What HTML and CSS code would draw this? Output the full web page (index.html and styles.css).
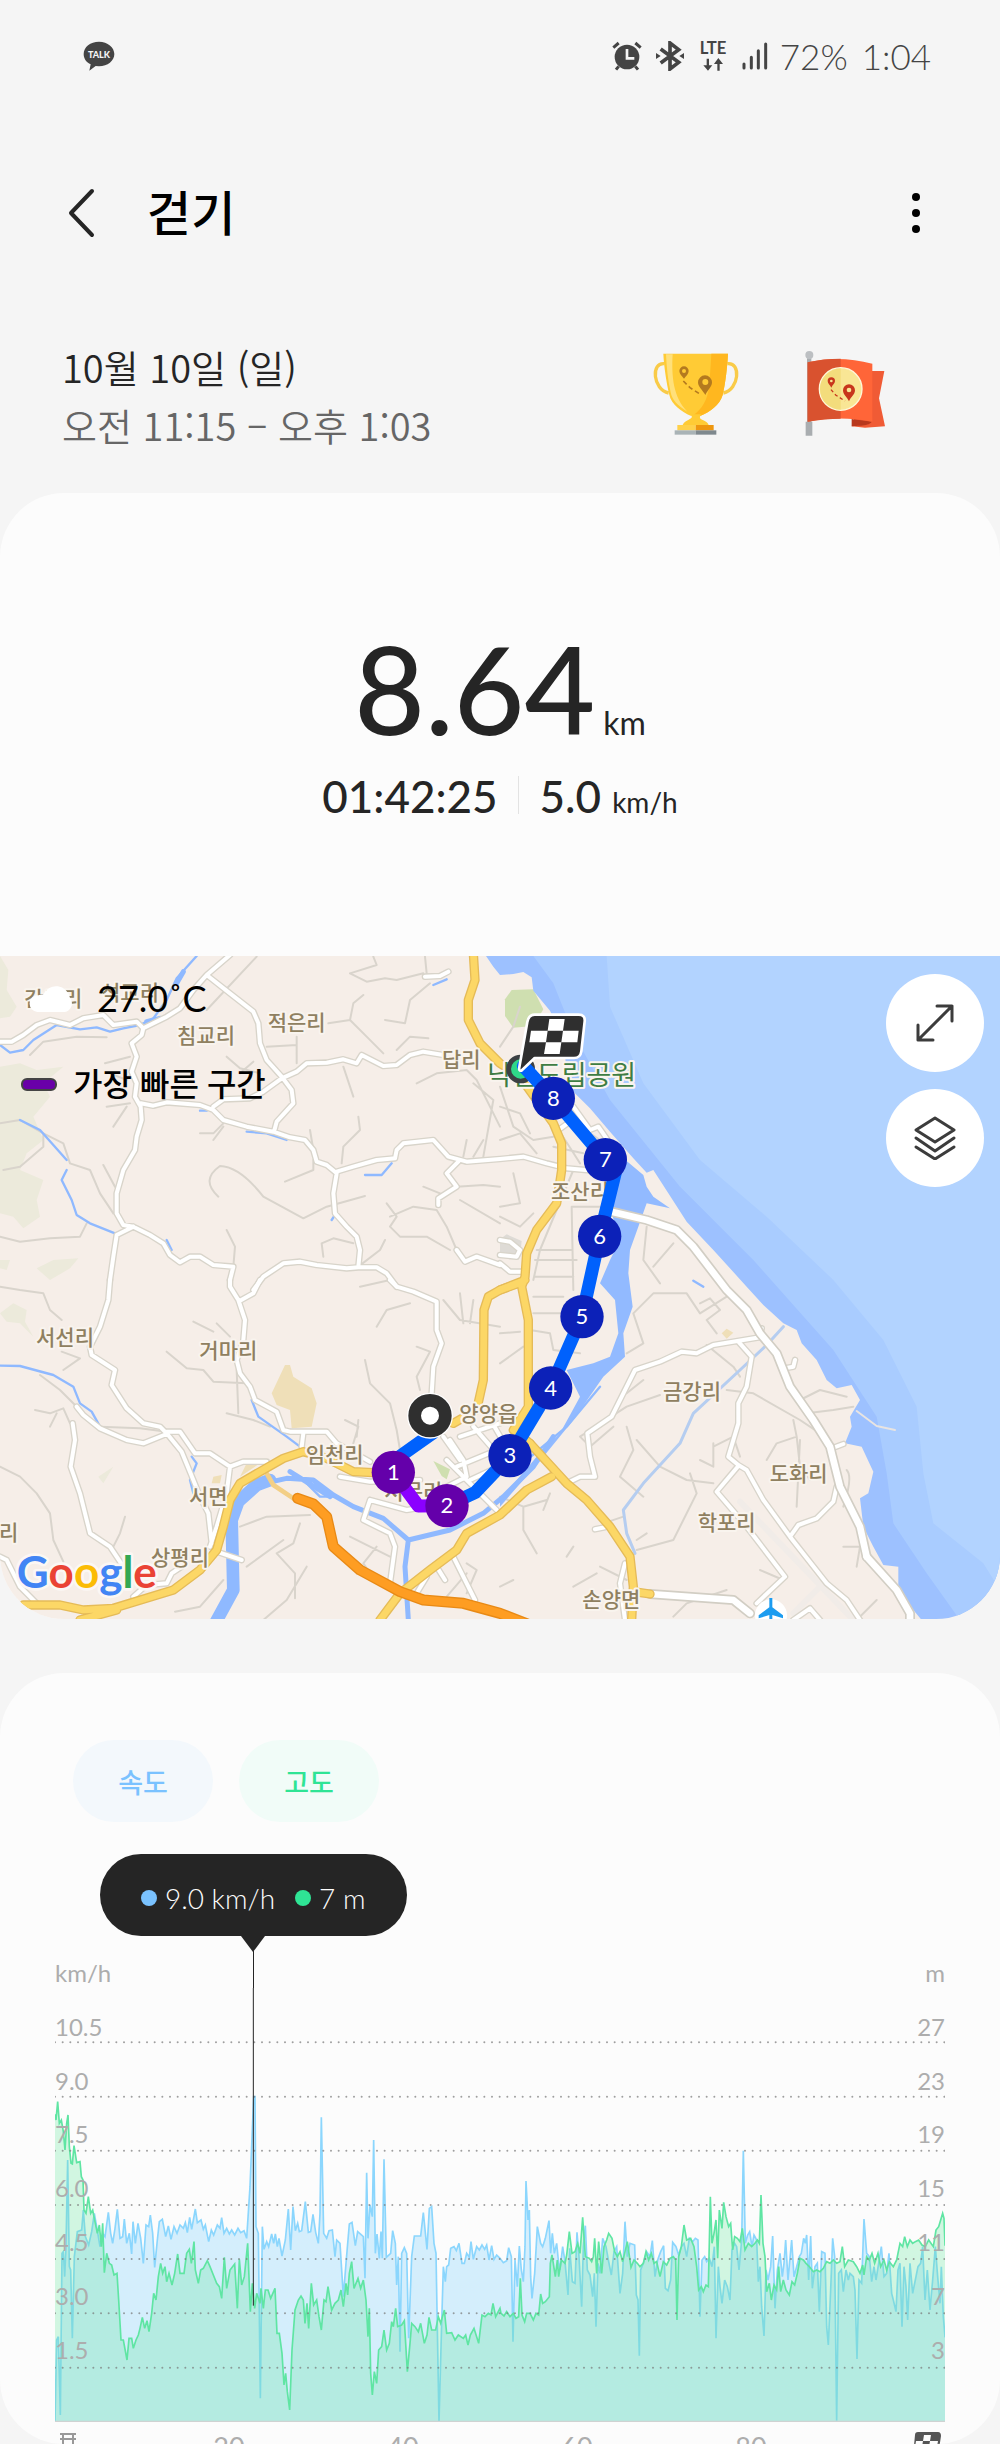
FILE: index.html
```html
<!DOCTYPE html>
<html lang="ko">
<head>
    <meta charset="UTF-8">
    <meta name="viewport" content="width=device-width, initial-scale=1.0">
    <title>걷기</title>
    <link rel="stylesheet" href="styles.css">
</head>
<body>
    <div class="status-bar">
        <svg class="talk" viewBox="0 0 96 90" aria-hidden="true">
            <path d="M48 2C22 2 2 18 2 39c0 14 8 25 21 31l-4 19 19-14 10 1c26 0 46-17 46-37S74 2 48 2z"/>
            <text x="48" y="50">TALK</text>
        </svg>
        <div class="status-right">
            <svg width="30" height="30" viewBox="0 0 90 90" aria-hidden="true">
                <circle cx="45" cy="48" r="37"/>
                <path class="cut" d="M45 24v28h22"/>
                <path class="line" d="M4 20L20 6M86 20L70 6M20 76l-8 10M70 76l8 10"/>
            </svg>
            <svg width="28" height="30" viewBox="0 0 84 90" aria-hidden="true">
                <path class="line thick" d="M14 24l54 40-26 20V6l26 20-54 40"/>
                <path d="M0 36l14 9-14 9zM84 36l-14 9 14 9z"/>
            </svg>
            <svg class="lte" width="30" height="32" viewBox="0 0 90 96" aria-hidden="true">
                <text x="45" y="42">LTE</text>
                <path d="M26 56h7v20h10L30 92 16 76h10zM58 92h7V72h10L61 54 48 72h10z"/>
            </svg>
            <svg width="26" height="28" viewBox="0 0 78 84" aria-hidden="true">
                <path class="bars" d="M6 66v12M28 46v32M49 26v52M71 6v72"/>
            </svg>
            <span class="battery">72%</span>
            <span class="clock">1:04</span>
        </div>
    </div>

    <header class="title-bar">
        <button class="icon-btn" aria-label="뒤로">
            <svg width="30" height="50" viewBox="0 0 30 50"><path class="chevron" d="M26 3L5 25l21 22"/></svg>
        </button>
        <h1>걷기</h1>
        <button class="icon-btn more" aria-label="더보기">
            <svg width="12" height="42" viewBox="0 0 12 42"><circle cx="6" cy="5" r="4"/><circle cx="6" cy="21" r="4"/><circle cx="6" cy="37" r="4"/></svg>
        </button>
    </header>

    <section class="when">
        <div>
            <p class="date">10월 10일 (일)</p>
            <p class="time">오전 11:15 – 오후 1:03</p>
        </div>
        <div class="badges">
            <svg width="90" height="90" viewBox="90 55 270 270" aria-hidden="true">
                <path fill="none" stroke="#f9cb48" stroke-width="10" d="M134 102c-42-6-36 78 12 88M322 102c42-6 36 78-12 88"/>
                <path fill="#ffcb35" d="M130 72h194c-2 40-8 90-16 124-8 30-40 52-66 62h-30c-26-10-58-34-64-62-8-34-16-84-18-124z"/>
                <path fill="#ffb71f" d="M274 72h50c-2 40-8 90-16 124-8 30-40 52-66 62h-24c30-20 44-50 48-80 4-36 6-70 8-106z"/>
                <path fill="#ffe07a" d="M138 74h20c-4 66 2 130 44 172-30-18-46-36-50-58-8-34-12-74-14-114z"/>
                <path fill="#ffcb35" d="M212 254h32c-8 10-4 14 6 18 8 4 14 8 16 14h-78c4-10 10-12 18-16 10-4 12-8 6-16z"/>
                <path fill="#ffd14a" d="M172 286h55v16h-55z"/><path fill="#ee970f" d="M227 286h54v16h-54z"/>
                <path fill="#a9b3b6" d="M164 302h63v13h-63z"/><path fill="#7f898e" d="M227 302h62v13h-62z"/>
                <path fill="#b47a1f" d="M192 110a14 14 0 0 1 14 14c0 9-8 15-14 23-6-8-14-14-14-23a14 14 0 0 1 14-14z"/>
                <path fill="#b47a1f" d="M255 137a21 21 0 0 1 21 21c0 14-14 24-20 38-8-14-22-24-22-38a21 21 0 0 1 21-21z"/>
                <circle cx="192" cy="124" r="6" fill="#ffcb35"/><circle cx="256" cy="157" r="9" fill="#ffcb35"/>
                <path fill="none" stroke="#b47a1f" stroke-width="5" stroke-dasharray="14 9" d="M190 154l20 20 34 22"/>
            </svg>
            <svg width="90" height="90" viewBox="545 55 270 270" aria-hidden="true">
                <path fill="#a9adb0" d="M560 86h13v190h3v42h-20v-42h4z"/><circle cx="567" cy="76" r="12" fill="#bcbfc2"/>
                <path fill="#f05b35" d="M750 124h42l-16 82 18 84-60 4-40-4z"/>
                <path fill="#b8381d" d="M694 268l61 8v-4c0 18-40 16-61 18z"/>
                <path fill="#ff6538" d="M562 98c70-16 130-12 194 4v174c-64-12-124-14-194 0z"/>
                <path fill="#d9522f" d="M562 98c34-8 66-11 99-11v180c-32 0-64 3-99 9z"/>
                <circle cx="661" cy="178" r="64" fill="#f9e695" stroke="#fff7d8" stroke-width="4"/>
                <path fill="#f3dc7c" d="M661 116v124a62 62 0 0 1 0-124z"/>
                <path fill="#c8361c" d="M633 143a11 11 0 0 1 11 11c0 8-8 12-11 20-4-8-11-12-11-20a11 11 0 0 1 11-11z"/>
                <path fill="#c8361c" d="M686 164a18 18 0 0 1 18 18c0 13-13 20-18 33-6-13-18-20-18-33a18 18 0 0 1 18-18z"/>
                <circle cx="633" cy="154" r="4" fill="#f9e695"/><circle cx="686" cy="181" r="7" fill="#f9e695"/>
                <path fill="none" stroke="#c8361c" stroke-width="4" stroke-dasharray="10 8" d="M632 180l14 16 28 18"/>
            </svg>
        </div>
    </section>

    <main>
        <section class="card">
            <div class="stats">
                <p class="distance">8.64<span class="unit">km</span></p>
                <p class="details">
                    <span>01:42:25</span>
                    <span class="pace">5.0 <small>km/h</small></span>
                </p>
            </div>

            <div class="map">
                <!-- map is drawn on a 3x grid, one translated group per quarter -->
                <svg class="map-canvas" viewBox="0 0 3000 1989" role="img" aria-label="지도">
                    <defs>
                        <g id="roads">
                            <path transform="translate(0 -48)" d="M0 305L35 305 70 285 110 255 150 240 210 255 250 235 310 225 340 255 410 245 430 265 500 230 540 205 580 150 620 105 690 45M620 105L690 160 760 215 775 250 780 310 800 360 845 410 875 450 880 490 830 545 822 575M430 265L425 285 395 310 410 350 395 395 410 430 405 470 422 500 425 540 410 590 405 630 370 690 350 760 350 820 370 855 400 860M422 490L460 497 500 487 600 495 640 510 670 540 740 560 820 575 870 592 915 600 940 630 950 665 980 675 1010 700M640 500L670 478 750 475 790 455 845 415 890 395 920 370 980 368 1030 358 1070 370 1085 345 1150 378 1190 375 1230 345 1270 335 1330 345M1010 695L1060 680 1130 660 1185 655 1190 630 1210 610 1300 600 1345 650 1400 665 1500 657 1570 650 1640 670 1700 685 1780 692M1010 700L1000 760 1005 820 1040 860 1070 890 1080 930 1075 980M400 860L450 885 490 910 510 945 540 967 570 950 600 950 640 975 700 980 690 1020M400 860L350 885 340 950 330 1020M760 1050L790 1010 850 970 900 965 950 975 1040 985 1075 982 1130 982 1160 1000 1190 1040M1375 665L1340 700 1370 740 1315 775 1315 795M1370 930L1395 965 1430 950 1500 975M1275 110L1320 108 1345 95"/>
                            <path transform="translate(1500 -48)" d="M220 500L270 570 295 560 330 610M175 570L210 545M0 900L30 905 60 930 50 950 0 945M0 970L30 995 65 995"/>
                            <path transform="translate(0 972)" d="M330 0L325 60 300 140 270 200 275 225 345 270 335 315 380 385 430 430 480 440 500 460 545 515 580 600 600 650 625 700 635 790M500 455L540 455 585 520 630 520 690 560 730 545 800 545M690 560L680 640 650 740 630 800M500 462L430 490 380 480 300 445 250 405 230 380M218 430L225 480 212 560 240 640 270 760 330 800 370 860M690 0L690 20 715 60 735 120 730 180 710 240 720 280 750 320 765 360 830 395 850 450 870 455 980 455 1010 490 1110 545M780 0L760 40 720 62M910 460L905 500M1170 0L1190 20 1240 35 1310 65 1310 150 1325 190 1300 260 1295 340M1110 660L1090 720 1170 760 1185 800 1170 910M1110 660L1220 690 1280 680M1020 590L1110 605 1260 600M1340 540L1440 640 1490 690M1350 480L1390 540 1400 590 1340 620M1370 560L1540 490M1410 600L1540 540M1420 440L1490 520M1380 470L1530 420M1460 400L1530 520M1330 470L1380 540M0 830L20 840 60 920 110 970M1360 830L1390 890 1425 960M1280 890L1250 940M1310 860L1335 900M650 815L725 840M400 950L440 915 500 910 515 880 545 860"/>
                            <path transform="translate(1500 972)" d="M200 610L240 590 285 590 270 530 262 460 335 410 370 340 405 270 480 245 545 215 590 220 640 195 780 172M715 185L755 230 740 320 715 370 715 430 685 530 715 555 740 570 790 660 870 770 980 910 1040 960 1080 1020M715 558L650 635 740 740 855 890 770 970M870 770L895 735 950 715 1000 665 1010 620M855 265L880 260 885 240M995 505L1030 492M780 165L785 145M285 748L315 742M375 850L360 910 375 1020M880 1020L930 985 960 1020"/>
                        </g>
                        <g id="coast-road">
                            <path transform="translate(1500 -48)" d="M335 815L440 840 530 870 580 920 680 1050 740 1110 780 1180 830 1240 870 1340 940 1440 990 1520 1020 1640 1080 1760 1100 1850"/>
                            <path transform="translate(1500 972)" d="M1100 830L1190 930 1230 1000 1230 1030M450 942L700 960 750 1000"/>
                        </g>
                        <g id="trunk">
                            <path transform="translate(0 -48)" d="M1420 40L1425 120 1405 180 1405 240 1440 310 1500 370 1560 410 1610 480 1660 550 1685 610 1685 690 1670 790 1610 870 1580 940 1575 1010 1565 1040 1585 1140 1585 1400 1540 1470 1590 1510M1500 1050L1575 1020"/>
                            <path transform="translate(0 972)" d="M70 975L180 975 250 990 340 985 520 930 600 870 650 810 670 740 690 660 720 610 780 575 850 535 910 515 980 535 1060 575 1120 578M1570 5L1500 30 1465 50 1452 90 1450 300 1430 390 1360 430M240 1020L350 990M1140 1020L1200 940 1290 870 1370 810 1400 760 1500 705 1580 630 1655 590"/>
                            <path transform="translate(1500 972)" d="M90 490L200 610 260 660 330 740 390 830 400 920 395 1020M450 942L400 935"/>
                        </g>
                    </defs>

                    <rect class="land" width="3000" height="1989"/>
                    <g class="forest">
                        <path transform="translate(0 -48)" d="M0 48L25 90 20 150 50 200 30 230 0 235zM0 380L60 370 110 390 190 380 130 430 150 470 100 530 130 600 80 640 60 690 130 720 110 780 120 830 70 865 40 830 0 820zM110 985L160 960 235 955 210 985 150 1020zM0 960L30 960 20 990 0 985z"/>
                        <path transform="translate(0 972)" d="M0 100L40 70 80 90 75 125 100 170 60 130 20 125zM295 590L340 560 310 610z"/>
                    </g>
                    <path class="park" d="M1515 130L1535 102 1600 100 1630 160 1600 210 1540 215 1515 180z"/>
                    <path class="park" d="M1300 1515L1350 1540 1340 1570 1325 1560z"/>
                    <path class="sand" transform="translate(0 972)" d="M855 255L870 255 880 290 935 325 950 370 935 440 875 445 870 390 830 375 815 340zM640 590L665 585 660 610 635 610zM740 550L780 550 720 590z"/>
                    <path class="sand" d="M2165 1132L2180 1118 2200 1130 2180 1148z"/>
                    <path class="block" d="M1500 850L1520 835 1565 855 1560 905 1500 900z"/>
                    <path class="airfield" transform="translate(1500 972)" d="M720 665L1060 1020M880 1000L960 920"/>

                    <g class="lanes">
                        <path transform="translate(0 -48)" d="M90 345L130 305 230 290 320 292M620 210L770 50M1050 100L1130 75 1120 50M1050 100L1100 125 1155 115 1190 120 1270 100M1275 50L1280 100M1155 240L1215 250 1230 180 1290 130M985 250L1050 240 1060 190 1090 165M1050 240L1100 290 1150 340M1190 330L1230 290 1285 295M890 290L890 370M800 320L890 315M680 350L720 385 780 400M720 400L760 365M600 580L640 580 670 550M640 600L670 560M315 370L390 350M330 400L380 420 400 390M340 560L380 500M320 500L390 490M0 550L60 540 130 580 190 610 210 670 270 690 300 760 340 820M130 580L130 620 60 680 10 690M310 675L345 740M0 890L60 905 150 895 240 890 260 850M655 770Q600 720 660 678Q720 680 790 770L910 835 980 800 1095 768M940 660L940 690 855 725M930 570L940 630M1075 530L1080 570 1030 620 1025 670M1030 380L1060 470M1250 430L1310 400 1400 390 1430 420 1500 560M1420 430L1480 480 1450 650M1270 740L1320 760M1160 790L1190 830 1170 860 1200 890 1280 890 1350 930M1170 830L1240 800 1310 810 1340 860 1370 930M1370 740L1450 735 1500 740M1380 780L1500 850M970 950L965 910 1000 895 1060 910M1075 980L1140 930 1155 900M680 870L705 920 700 980M1080 1040L1170 1020M1400 600L1390 650M1450 600L1420 650"/>
                        <path transform="translate(1500 -48)" d="M0 320L40 260 60 200M0 440L40 560 100 600 160 590M0 600L60 580 110 640M0 500L60 520 90 580M110 930L215 930M105 960L230 960M105 1010L220 1010M215 800L220 1050M300 800L215 800M220 690L120 930 100 1020M0 830L60 860 100 820M40 700L60 790 0 800M170 560L240 670M160 620L250 640M440 860L430 960 480 1030M520 910L460 980M300 600L240 560"/>
                        <path transform="translate(0 972)" d="M0 20L60 30 130 40 150 90 185 120M580 125L640 155M650 130L690 170M500 215L560 265 610 270 640 305 740 310M710 270L715 400M680 400L760 420 810 440M120 285L180 330 225 375M185 215L240 235 190 270M105 390L150 400 190 385 210 430M150 440L170 400M300 440L420 445 500 455M0 560L60 590 110 640 150 700 160 780 190 845M375 710L360 760 340 800M525 995L600 980 670 900M720 740L800 710 930 705M790 1020L860 960 920 860M885 955L885 880 830 820 880 790 900 730M740 860L850 780M1130 140L1160 90 1230 70M1095 240L1110 310 1170 370 1190 450 1200 510M1035 420L1075 440 1060 490M1075 420L1070 470M1250 200L1290 215 1250 290 1260 330M1330 60L1380 120 1500 140M1380 40L1390 130M1420 60L1410 130M1130 800L1090 850 1110 880M1050 770L1170 830M1340 950L1400 880M1400 850L1430 870 1400 940"/>
                        <path transform="translate(1500 972)" d="M0 160L60 155M0 250L70 200M100 50L190 50M100 100L180 100M90 150L150 160 160 210 240 220M400 100L430 190 380 220M400 100L460 40 560 40 600 100 680 50M600 70L630 55 660 90 620 120 650 160M620 195L700 260 720 290M380 340L430 300M480 345L380 380 240 470 270 500 340 440M680 330L760 340 900 420 960 460M880 420L890 470 830 490 800 540M890 470L900 560 930 600M900 480L890 680M380 440L400 510 360 590 430 650M410 480L480 560 560 600 640 610M570 580L590 640 550 720 520 780 410 810M640 490L640 560 600 540M720 530L700 470 640 500M0 650L70 680 70 750 110 820M70 680L140 660M150 640L130 690M40 900L0 920M300 860L380 900M220 920L290 880M520 1010L560 970 680 930M780 870L850 900M1070 1020L1130 960M1040 570Q1060 590 1030 680M1030 800L1080 800 1070 860M900 360L960 330 1040 350M920 400L1000 390 1060 380M370 710L310 730M410 780L440 760M200 830L220 800"/>
                    </g>

                    <g class="water" transform="translate(1500 -48)">
                        <path class="shallow" d="M-42 48L-20 80 0 105 40 102 70 96 95 112 100 152 150 212 190 300 205 440 270 505 330 575 400 655 440 698 460 690 505 760 560 845 640 930 740 1040 790 1095 850 1150 890 1170 905 1210 950 1260 980 1320 1010 1345 1055 1335 1080 1380 1050 1430 1055 1460 1035 1510 1085 1520 1120 1595 1105 1660 1080 1675 1090 1760 1120 1820 1150 1875 1195 1880 1195 1940 1240 2010 1265 2040 1500 2040 1500 48z"/>
                        <path class="mid" d="M100 48L160 130 220 280 330 480 540 740 760 960 1000 1230 1130 1430 1160 1600 1180 1750 1280 1900 1380 2040 1500 2040 1500 48z"/>
                        <path class="deep" d="M320 48L330 200 430 430 600 660 800 830 1000 1020 1150 1200 1250 1400 1270 1600 1300 1750 1450 1870 1500 1950 1500 48z"/>
                        <path d="M370 655L430 705 440 740 460 770 510 805 440 790 415 860 390 930 385 1000 398 1100 370 1180 375 1250 310 1310 220 1440 130 1550 0 1700 0 1680 110 1550 180 1480 240 1370 200 1290 280 1270 330 1250 355 1180 345 1080 300 1030 330 960 360 900 335 820 355 720z"/>
                    </g>
                    <g class="river" transform="translate(0 972)">
                        <path class="wide" d="M640 1040L700 930 695 720 715 665 770 615 810 600"/>
                        <path class="medium" d="M770 615L860 595 940 600 1000 645 1060 680 1150 715 1225 780 1350 750 1450 700 1510 650 1600 560 1660 470M870 575L990 650M1225 780L1215 860 1225 1020"/>
                        <path d="M0 257L60 258 160 285 220 320 240 370 275 395 300 440 370 475M755 360L775 410 860 470 900 500M575 530L590 550 570 600 580 640M920 610L960 650 1000 650M1580 540L1700 440 1800 320"/>
                        <path class="canal" d="M2300 195L2220 270 2080 400 2040 490 1930 610 1870 690 1880 760 1905 820M2300 195L2350 140"/>
                    </g>
                    <g class="river" transform="translate(0 -48)">
                        <path d="M590 48L530 115 500 180 460 235 420 255 370 265 330 275 290 262 240 268 170 255 100 300 70 330 30 338 0 315M600 512L620 512M740 575L800 580 860 600M200 690L185 720 215 780 230 825 270 850 345 880M60 540L120 570 200 660M1095 705L1145 705 1175 670M1300 135L1340 118M500 900L515 930M995 840L1005 825M2080 1022L2110 1040"/>
                        <path class="medium" d="M550 95L530 130M440 245L480 235"/>
                    </g>

                    <use href="#roads" class="road-case"/>
                    <use href="#roads" class="road"/>
                    <use href="#coast-road" class="coast-case"/>
                    <use href="#coast-road" class="coast"/>
                    <path class="ramp" transform="translate(0 972)" d="M800 580L820 615 880 655"/>
                    <use href="#trunk" class="trunk-case"/>
                    <use href="#trunk" class="trunk"/>
                    <path class="motorway-case" transform="translate(0 972)" d="M893 655L940 672 980 710 1000 800 1080 870 1200 935 1270 960 1390 970 1500 1000 1590 1035"/>
                    <path class="motorway" transform="translate(0 972)" d="M893 655L940 672 980 710 1000 800 1080 870 1200 935 1270 960 1390 970 1500 1000 1590 1035"/>
                    <path class="pier" d="M2570 1365L2630 1410 2685 1422"/>
                    <circle cx="2313" cy="1978" r="48" fill="#fff"/>
                    <path fill="#1c9cf0" d="M2308 1926h9v28l32 24v9l-32-10v20h-9v-20l-32 10v-9l32-24z"/>

                    <g class="places">
                        <text x="160" y="150">간교리</text>
                        <text x="390" y="132">석교리</text>
                        <text x="618" y="260">침교리</text>
                        <text x="890" y="222">적은리</text>
                        <text x="1384" y="334">답리</text>
                        <text x="1740" y="728">조산리</text>
                        <text x="195" y="1168">서선리</text>
                        <text x="685" y="1205">거마리</text>
                        <text x="1465" y="1395">양양읍</text>
                        <text x="1004" y="1518">임천리</text>
                        <text x="1240" y="1630">서문리</text>
                        <text x="625" y="1645">서면</text>
                        <text x="540" y="1828">상평리</text>
                        <text x="26" y="1752">리</text>
                        <text x="2076" y="1328">금강리</text>
                        <text x="2396" y="1574">도화리</text>
                        <text x="2180" y="1722">학포리</text>
                        <text x="1834" y="1952">손양면</text>
                        <text class="park-name" x="1685" y="386">낙산도립공원</text>
                    </g>

                    <circle cx="1562" cy="339" r="36" fill="#2fd889" stroke="#3c4043" stroke-width="14"/>
                    <path class="route" d="M1570 330L1660 427 1816 611 1846 650 1799 841 1746 1082 1652 1296 1530 1499 1425 1610 1341 1649"/>
                    <path class="route" d="M1300 1430L1180 1515"/>
                    <path class="route fastest" d="M1180 1549L1255 1650 1341 1649"/>
                    <circle cx="1290" cy="1379" r="69" fill="#fff"/>
                    <circle cx="1290" cy="1379" r="46" fill="#fff" stroke="#2f2f2f" stroke-width="38"/>

                    <g class="pins">
                        <circle cx="1660" cy="427" r="65"/><text x="1660" y="450">8</text>
                        <circle cx="1816" cy="611" r="65"/><text x="1816" y="634">7</text>
                        <circle cx="1799" cy="841" r="65"/><text x="1799" y="864">6</text>
                        <circle cx="1746" cy="1082" r="65"/><text x="1746" y="1105">5</text>
                        <circle cx="1652" cy="1296" r="65"/><text x="1652" y="1319">4</text>
                        <circle cx="1530" cy="1499" r="65"/><text x="1530" y="1522">3</text>
                        <circle class="fast" cx="1341" cy="1649" r="65"/><text x="1341" y="1672">2</text>
                        <circle class="fast" cx="1180" cy="1549" r="65"/><text x="1180" y="1572">1</text>
                    </g>

                    <g transform="translate(1500 -48)">
                        <path fill="#2f2f2f" stroke="#fff" stroke-width="8" d="M104 224H236Q256 224 254 244L244 334Q241 354 222 354H104L64 392Q56 394 58 382L82 246Q86 224 104 224z"/>
                        <path fill="#fff" d="M148 237h46l-5 35h-46zM93 272h50l-5 35h-50zM189 272h47l-4 35h-48zM138 307h46l-5 35h-47z"/>
                    </g>

                    <text class="google" x="50" y="1896"><tspan fill="#4285f4">G</tspan><tspan fill="#ea4335">o</tspan><tspan fill="#fbbc05">o</tspan><tspan fill="#4285f4">g</tspan><tspan fill="#34a853">l</tspan><tspan fill="#ea4335">e</tspan></text>
                </svg>

                <div class="map-info">
                    <p class="weather">
                        <svg width="44" height="32" viewBox="0 0 132 96" aria-hidden="true"><path fill="#fff" d="M28 90a24 24 0 0 1 4-50 20 20 0 0 1 14-2 42 42 0 0 1 80 10 26 26 0 0 1-16 42z"/></svg>
                        27.0˚C
                    </p>
                    <p class="legend"><i></i>가장 빠른 구간</p>
                </div>
                <div class="map-buttons">
                    <button aria-label="확대">
                        <svg width="38" height="38" viewBox="0 0 38 38"><path d="M2 36L36 2M21 2h15v15M2 21v15h15"/></svg>
                    </button>
                    <button aria-label="레이어">
                        <svg width="42" height="44" viewBox="0 0 42 44"><path d="M21 2L40 14 21 26 2 14zM2 22l19 13 19-13M2 31l19 12 19-12" /></svg>
                    </button>
                </div>
            </div>
        </section>

        <section class="card chart-card">
            <div class="filters">
                <button class="speed">속도</button>
                <button class="altitude">고도</button>
            </div>

            <div class="chart">
                <div class="units"><span>km/h</span><span>m</span></div>
                <div class="plot">
                    <svg viewBox="165 24 2670 1303" role="img" aria-label="속도 및 고도 그래프">
                        <polygon class="speed-area" points="155,1340 160,1325 165,1325 170,1080 175,1070 181,1305 186,820 190,815 194,890 198,800 203,540 208,860 212,870 217,1075 223,830 232,755 245,750 250,690 256,770 266,795 275,755 283,700 290,740 300,800 308,760 315,770 325,697 332,760 338,790 345,745 352,688 360,775 368,770 373,717 380,790 388,760 395,822 399,725 406,790 414,730 422,775 430,850 438,735 446,740 451,705 458,760 464,862 472,780 478,725 487,718 497,770 505,738 513,778 522,740 531,760 540,735 550,745 556,728 562,758 569,712 575,748 586,687 592,728 603,720 610,748 616,735 626,785 634,750 641,765 652,735 660,745 665,713 672,760 680,745 688,762 695,750 704,765 714,745 722,758 732,752 740,775 750,620 761,350 765,350 768,740 775,760 781,1255 787,740 792,808 800,785 806,800 815,762 821,790 826,762 832,800 837,775 846,828 856,780 865,687 872,810 879,680 886,752 893,730 898,755 905,752 916,665 925,757 932,755 939,703 947,757 955,790 960,700 964,412 971,760 980,775 987,752 997,750 1005,830 1010,780 1020,790 1030,950 1038,850 1048,732 1056,727 1066,797 1073,755 1085,765 1090,770 1095,895 1100,578 1104,775 1110,675 1117,710 1121,480 1126,820 1131,762 1138,835 1143,755 1147,835 1152,538 1159,832 1172,820 1178,752 1186,790 1190,915 1195,830 1200,1115 1205,820 1213,803 1220,820 1226,1075 1235,830 1243,768 1262,768 1270,698 1281,808 1288,685 1295,680 1302,790 1308,820 1317,1325 1325,1030 1330,860 1336,905 1340,860 1346,855 1352,805 1362,800 1369,812 1377,790 1386,850 1393,850 1400,820 1408,832 1413,785 1420,838 1430,800 1438,810 1446,795 1454,808 1460,795 1467,840 1475,797 1482,838 1490,825 1500,835 1510,848 1520,842 1526,803 1534,830 1539,1085 1545,840 1552,920 1558,798 1564,870 1570,905 1575,800 1578,603 1584,720 1588,690 1592,890 1596,955 1604,880 1612,740 1622,790 1628,800 1636,775 1647,722 1652,820 1657,760 1663,820 1670,790 1675,840 1680,870 1688,800 1695,845 1704,945 1709,805 1717,905 1725,910 1731,757 1737,830 1745,980 1750,800 1756,737 1762,870 1770,885 1778,950 1783,880 1788,1040 1794,850 1800,880 1808,775 1818,800 1826,845 1834,885 1842,815 1850,800 1860,940 1868,880 1875,725 1882,830 1890,790 1904,795 1909,945 1914,960 1918,1127 1922,870 1930,850 1940,815 1950,830 1957,782 1965,890 1973,840 1982,815 1991,797 1996,925 2004,932 2012,900 2018,787 2028,800 2036,825 2044,800 2052,790 2060,830 2068,775 2078,785 2086,775 2094,780 2100,1010 2106,840 2114,830 2120,845 2128,835 2136,860 2143,800 2148,1075 2155,860 2160,920 2166,970 2174,900 2182,920 2190,960 2196,810 2204,790 2210,800 2217,870 2225,780 2230,512 2236,790 2243,765 2249,755 2256,800 2262,765 2270,780 2275,905 2280,860 2285,980 2292,1068 2298,870 2304,900 2312,860 2318,768 2325,985 2332,870 2340,820 2347,890 2352,850 2357,780 2364,900 2375,780 2382,890 2390,860 2398,830 2404,820 2411,775 2416,790 2420,765 2426,900 2432,768 2437,925 2445,860 2452,850 2458,995 2465,815 2475,820 2480,1040 2485,1095 2492,930 2498,775 2504,830 2510,1322 2516,880 2524,870 2530,935 2538,870 2545,900 2550,880 2560,890 2565,930 2571,1137 2577,900 2585,910 2592,717 2600,820 2608,830 2615,905 2622,860 2628,900 2636,850 2644,800 2652,890 2660,880 2667,820 2675,940 2680,960 2688,995 2694,870 2700,850 2706,1040 2712,860 2718,920 2723,1020 2730,850 2738,940 2746,900 2754,860 2762,850 2768,800 2775,960 2782,870 2790,990 2798,900 2806,800 2813,890 2820,970 2824,860 2830,1010 2835,1070 2845,1080 2845,1340"/>
                        <polygon class="altitude-area" points="155,1340 155,405 165,405 168,420 173,365 178,430 184,420 190,455 195,510 200,430 204,405 208,500 213,550 217,552 222,497 230,548 240,545 244,590 249,600 252,690 258,700 265,650 272,700 278,690 286,730 292,760 298,735 304,800 308,730 313,878 320,820 328,850 335,855 342,885 351,880 356,960 363,1080 370,1080 381,1140 387,1075 395,1075 400,1105 408,1080 415,1065 420,1045 427,1012 434,1045 441,1022 447,1055 455,1000 461,940 468,960 475,890 482,850 488,880 495,860 500,905 507,880 516,915 524,880 533,822 540,880 552,880 560,820 568,808 574,850 582,785 586,870 595,910 602,870 610,865 622,842 630,860 640,885 650,910 658,920 665,955 673,832 680,925 690,870 704,852 712,985 718,838 725,915 733,890 743,790 751,995 757,910 764,985 770,940 780,970 783,925 790,985 796,930 804,930 812,955 825,925 831,1060 838,1060 846,1120 852,1215 857,1180 862,1235 869,1290 876,1110 885,990 895,960 903,948 910,960 915,1030 921,970 926,1045 934,910 941,975 950,960 957,1010 964,1050 972,960 978,965 984,920 995,990 1005,970 1015,960 1023,930 1030,980 1038,910 1043,945 1048,880 1055,845 1062,925 1074,895 1082,925 1090,900 1098,960 1104,1070 1108,985 1112,1180 1117,1245 1123,1175 1130,1210 1136,1110 1145,1100 1152,1050 1160,1110 1168,1090 1175,1025 1180,1040 1187,985 1193,1040 1205,1035 1213,1022 1222,1175 1230,1090 1235,1030 1245,1040 1255,1055 1262,1030 1273,1090 1281,1065 1287,1012 1295,1050 1307,1050 1315,1010 1322,1030 1333,990 1340,1060 1355,1058 1365,1080 1375,1065 1390,1075 1397,1065 1404,1095 1411,1065 1422,1045 1436,1090 1446,1005 1455,1010 1465,1000 1473,1005 1479,970 1487,1010 1500,985 1503,1000 1512,1008 1520,995 1530,1010 1540,1000 1548,1015 1556,1010 1561,895 1566,1005 1574,1025 1580,1000 1590,1000 1600,1020 1608,1000 1616,1005 1622,942 1628,970 1636,965 1648,950 1651,850 1656,825 1666,890 1672,840 1676,890 1684,840 1695,850 1700,825 1708,755 1716,820 1725,815 1733,790 1740,820 1748,712 1756,830 1768,835 1775,845 1780,830 1784,775 1790,880 1796,785 1805,880 1812,800 1820,780 1826,760 1836,775 1844,815 1852,830 1860,815 1868,845 1882,785 1893,862 1902,840 1912,850 1920,860 1930,850 1938,815 1946,840 1954,820 1962,850 1970,845 1980,890 1990,845 2000,855 2010,835 2020,830 2027,840 2031,1020 2036,830 2044,800 2052,735 2060,780 2072,775 2082,800 2090,860 2096,930 2104,920 2110,935 2118,915 2125,920 2131,650 2136,790 2142,760 2148,720 2153,835 2158,690 2166,745 2171,667 2178,710 2186,740 2192,730 2198,810 2204,770 2212,775 2220,785 2227,745 2235,810 2245,790 2255,800 2265,790 2272,780 2278,790 2283,645 2289,790 2295,830 2300,935 2308,910 2314,960 2322,915 2330,930 2336,860 2342,935 2350,900 2358,930 2368,945 2376,905 2384,915 2392,880 2400,835 2410,840 2418,850 2428,860 2440,875 2450,870 2460,875 2470,865 2480,845 2490,850 2500,840 2510,850 2520,845 2527,800 2534,860 2545,840 2560,845 2570,860 2580,880 2588,855 2592,885 2600,830 2608,840 2616,820 2624,850 2634,820 2642,860 2652,840 2660,870 2668,845 2680,860 2690,840 2700,790 2708,800 2714,770 2722,800 2730,780 2738,790 2746,785 2756,780 2766,795 2776,800 2786,780 2800,800 2808,750 2816,740 2822,720 2828,700 2832,715 2835,795 2845,795 2845,1340"/>
                        <path class="grid" d="M165 187H2835M165 350H2835M165 512H2835M165 675H2835M165 837H2835M165 1000H2835M165 1163H2835"/>
                        <path class="cursor" d="M760 0V977"/>
                        <path class="base" d="M165 1325H2835"/>
                    </svg>
                    <ul class="axis">
                        <li>10.5</li><li>9.0</li><li>7.5</li><li>6.0</li><li>4.5</li><li>3.0</li><li>1.5</li><li></li>
                    </ul>
                    <ul class="axis right">
                        <li>27</li><li>23</li><li>19</li><li>15</li><li>11</li><li>7</li><li>3</li><li></li>
                    </ul>
                    <div class="tooltip"><i></i>9.0 km/h<i class="green"></i>7 m</div>
                </div>
                <div class="minutes">
                    <svg width="18" height="20" viewBox="0 0 18 20" aria-hidden="true"><path d="M1 2h16M1 7h16M4 2v18M14 2v18"/></svg>
                    <span>20</span><span>40</span><span>60</span><span>80</span>
                    <svg class="finish" width="28" height="24" viewBox="0 0 28 24" aria-hidden="true">
                        <path fill="#555" d="M5 0h20q3 0 3 4l-3 20H0L2 3q0-3 3-3z"/>
                        <path fill="#fcfcfc" d="M11 3h7l-1 6h-7zM3 9h7l-1 6H2zM17 9h8l-1 6h-8zM9 15h7l-1 6H8z"/>
                    </svg>
                </div>
            </div>
        </section>
    </main>
</body>
</html>
```

FILE: styles.css
```css
* {
    margin: 0;
    padding: 0;
    box-sizing: border-box;
}

body {
    background: #f5f5f5;
    color: #252525;
    font-family: Lato, "Noto Sans CJK KR", sans-serif;
}

button {
    border: none;
    background: none;
    font-family: inherit;
    cursor: pointer;
}

/* status bar */
.status-bar {
    display: flex;
    justify-content: space-between;
    align-items: center;
    height: 80px;
    margin-bottom: 85px;
    padding: 32px 69px 0 83px;
    color: #444;
    fill: #444;
}

.talk {
    width: 32px;
    height: 30px;
}

.talk text {
    fill: #f5f5f5;
    font-size: 27px;
    font-weight: 900;
    text-anchor: middle;
}

.status-right {
    display: flex;
    align-items: center;
    gap: 14px;
    font-size: 35px;
    font-weight: 300;
}

.status-right .line {
    fill: none;
    stroke: #444;
    stroke-width: 9;
}

.status-right .thick {
    stroke-width: 11;
}

.status-right .cut {
    fill: none;
    stroke: #f5f5f5;
    stroke-width: 8;
}

.status-right .bars {
    stroke: #444;
    stroke-width: 9;
    stroke-linecap: round;
}

.battery {
    margin-left: -2px;
}

.lte text {
    font-size: 50px;
    font-weight: 700;
    text-anchor: middle;
}

/* title */
.title-bar {
    display: flex;
    align-items: center;
    height: 96px;
    padding: 0 56px 0 64px;
}

.title-bar h1 {
    margin-left: 49px;
    color: #000;
    font-size: 48px;
    font-weight: 500;
    line-height: 48px;
}

.icon-btn {
    display: flex;
    padding: 0 2px;
}

.chevron {
    fill: none;
    stroke: #252525;
    stroke-width: 4;
    stroke-linecap: round;
    stroke-linejoin: round;
}

.more {
    margin-left: auto;
    padding: 0 22px;
}

.when {
    display: flex;
    justify-content: space-between;
    margin: 77px 108px 39px 62px;
    font-family: "Noto Sans CJK KR", sans-serif;
    font-size: 38px;
    font-weight: 350;
    line-height: 58px;
}

.time {
    color: #666;
}

.badges {
    display: flex;
    gap: 62px;
    padding-top: 10px;
}

/* cards */
.card {
    overflow: hidden;
    border-radius: 64px;
    background: #fcfcfc;
}

.stats {
    padding: 120px 0 130px;
    text-align: center;
}

.distance {
    font-size: 122px;
    font-weight: 500;
    line-height: 150px;
}

.unit {
    margin-left: 8px;
    font-size: 32px;
    font-weight: 400;
    line-height: 1;
}

.details {
    display: flex;
    justify-content: center;
    align-items: center;
    margin-top: 3px;
    font-size: 44px;
    font-weight: 500;
    line-height: 60px;
}

.pace {
    position: relative;
    margin-left: 42px;
}

.pace::before {
    content: "";
    position: absolute;
    left: -22px;
    top: 10px;
    width: 1px;
    height: 38px;
    background: #e3e3e3;
}

.details small {
    font-size: 28px;
    font-weight: 400;
    line-height: 1;
}

/* map */
.map {
    position: relative;
}

.map-canvas {
    display: block;
    width: 100%;
    fill: none;
    stroke-linecap: round;
    stroke-linejoin: round;
}

.land { fill: #f6eee8; }
.forest { fill: #eceadb; }
.park { fill: #cfdfb0; }
.sand { fill: #efdfb8; }
.block { fill: #dedbd6; }
.airfield { stroke: #f1ece8; stroke-width: 18; }
.lanes { stroke: #d9d4cc; stroke-width: 6; }
.water { fill: #92baff; }
.shallow { fill: #9dc1ff; }
.mid { fill: #a9ccff; }
.deep { fill: #b2d3ff; }
.river { stroke: #8fb9ff; stroke-width: 7; }
.wide { stroke-width: 38; }
.medium { stroke-width: 15; }
.canal { stroke: #b5cdf0; stroke-width: 9; }
.road-case { stroke: #d8d4ca; stroke-width: 20; }
.road { stroke: #fff; stroke-width: 12; }
.coast-case { stroke: #d2cec4; stroke-width: 30; }
.coast { stroke: #fff; stroke-width: 20; }
.ramp { stroke: #f3cf86; stroke-width: 14; }
.trunk-case { stroke: #e5bb58; stroke-width: 28; }
.trunk { stroke: #fcd766; stroke-width: 20; }
.motorway-case { stroke: #e88a16; stroke-width: 33; }
.motorway { stroke: #fe9d22; stroke-width: 25; }
.pier { stroke: #e8e4e2; stroke-width: 6; }

.places {
    fill: #8f8060;
    stroke: #f9f4ee;
    stroke-width: 12;
    paint-order: stroke;
    font-size: 63px;
    font-weight: 500;
    text-anchor: middle;
}

.places .park-name {
    fill: #3f7d43;
    font-size: 81px;
    font-weight: 400;
}

.route {
    stroke: #0061fd;
    stroke-width: 39;
}

.fastest { stroke: #8b00ff; }

.pins {
    fill: #0c21b8;
    font-size: 66px;
    text-anchor: middle;
}

.pins .fast { fill: #6400aa; }
.pins text { fill: #fff; }

.google {
    stroke: #fbf7f4;
    stroke-width: 16;
    paint-order: stroke;
    font-size: 132px;
    font-weight: 700;
}

.map-info {
    position: absolute;
    top: 16px;
    left: 21px;
    color: #000;
}

.weather {
    display: flex;
    align-items: center;
    gap: 25px;
    padding-left: 7px;
    font-size: 36px;
    line-height: 52px;
}

.legend {
    display: flex;
    align-items: center;
    gap: 16px;
    margin-top: 34px;
    font-size: 32px;
    font-weight: 500;
    line-height: 52px;
}

.legend i {
    width: 36px;
    height: 13px;
    border: 2px solid #444;
    border-radius: 6px;
    background: #6900a8;
}

.map-buttons {
    position: absolute;
    top: 18px;
    right: 16px;
    display: grid;
    gap: 17px;
}

.map-buttons button {
    display: grid;
    place-items: center;
    width: 98px;
    height: 98px;
    border-radius: 50%;
    background: #fff;
}

.map-buttons path {
    fill: none;
    stroke: #3c3c3c;
    stroke-width: 3;
    stroke-linecap: round;
    stroke-linejoin: round;
}

/* chart */
.chart-card {
    margin-top: 54px;
    padding: 67px 55px 0;
}

.filters {
    display: flex;
    gap: 26px;
    padding-left: 18px;
}

.filters button {
    width: 140px;
    height: 82px;
    border-radius: 41px;
    font-size: 27px;
    font-weight: 500;
}

.filters .speed {
    background: #f3f8fc;
    color: #7ac2ff;
}

.filters .altitude {
    background: #f1fcf8;
    color: #2fe495;
}

.chart {
    margin-top: 136px;
    color: #adadad;
    font-size: 24px;
}

.units {
    display: flex;
    justify-content: space-between;
    line-height: 30px;
}

.plot {
    position: relative;
    display: grid;
}

.plot > svg,
.axis {
    grid-area: 1 / 1;
}

.plot > svg {
    display: block;
    width: 100%;
    overflow: hidden;
}

.axis {
    display: grid;
    grid-template-rows: repeat(8, 1fr);
    align-items: end;
    list-style: none;
    line-height: 30px;
    padding-bottom: 4px;
}

.axis.right {
    text-align: right;
}

.speed-area {
    fill: rgba(90, 195, 253, 0.25);
    stroke: #8bd6fd;
    stroke-width: 5;
}

.altitude-area {
    fill: rgba(98, 230, 155, 0.28);
    stroke: #5fe5a3;
    stroke-width: 5;
}

.grid {
    stroke: rgba(120, 120, 120, 0.7);
    stroke-width: 6;
    stroke-linecap: round;
    stroke-dasharray: 0 23;
}

.cursor {
    stroke: #252525;
    stroke-width: 3;
}

.base {
    stroke: #cfd2d2;
    stroke-width: 5;
}

.tooltip {
    position: absolute;
    bottom: calc(100% + 52px);
    left: 45px;
    display: flex;
    align-items: center;
    height: 82px;
    padding: 6px 42px 0 41px;
    border-radius: 41px;
    background: #252525;
    color: #fcfcfc;
    font-size: 28px;
    font-weight: 300;
}

.tooltip::before {
    content: "";
    position: absolute;
    top: 100%;
    left: 141px;
    border: 12px solid transparent;
    border-top: 16px solid #252525;
    border-bottom: none;
}

.tooltip::after {
    content: "";
    position: absolute;
    top: calc(100% + 15px);
    left: 153px;
    width: 1px;
    height: 37px;
    background: #252525;
}

.tooltip i {
    width: 16px;
    height: 16px;
    margin-right: 8px;
    border-radius: 50%;
    background: #7ac2ff;
}

.tooltip .green {
    margin-left: 20px;
    background: #2fe495;
}

.minutes {
    display: grid;
    grid-template-columns: 87fr repeat(4, 174fr) 107fr;
    height: 22px;
    padding-top: 10px;
    overflow: hidden;
    font-size: 27px;
    line-height: 30px;
    text-align: center;
}

.minutes svg {
    margin-left: 4px;
    fill: none;
    stroke: #999;
    stroke-width: 2;
}

.minutes .finish {
    justify-self: end;
    margin-right: 4px;
    stroke: none;
}
```
